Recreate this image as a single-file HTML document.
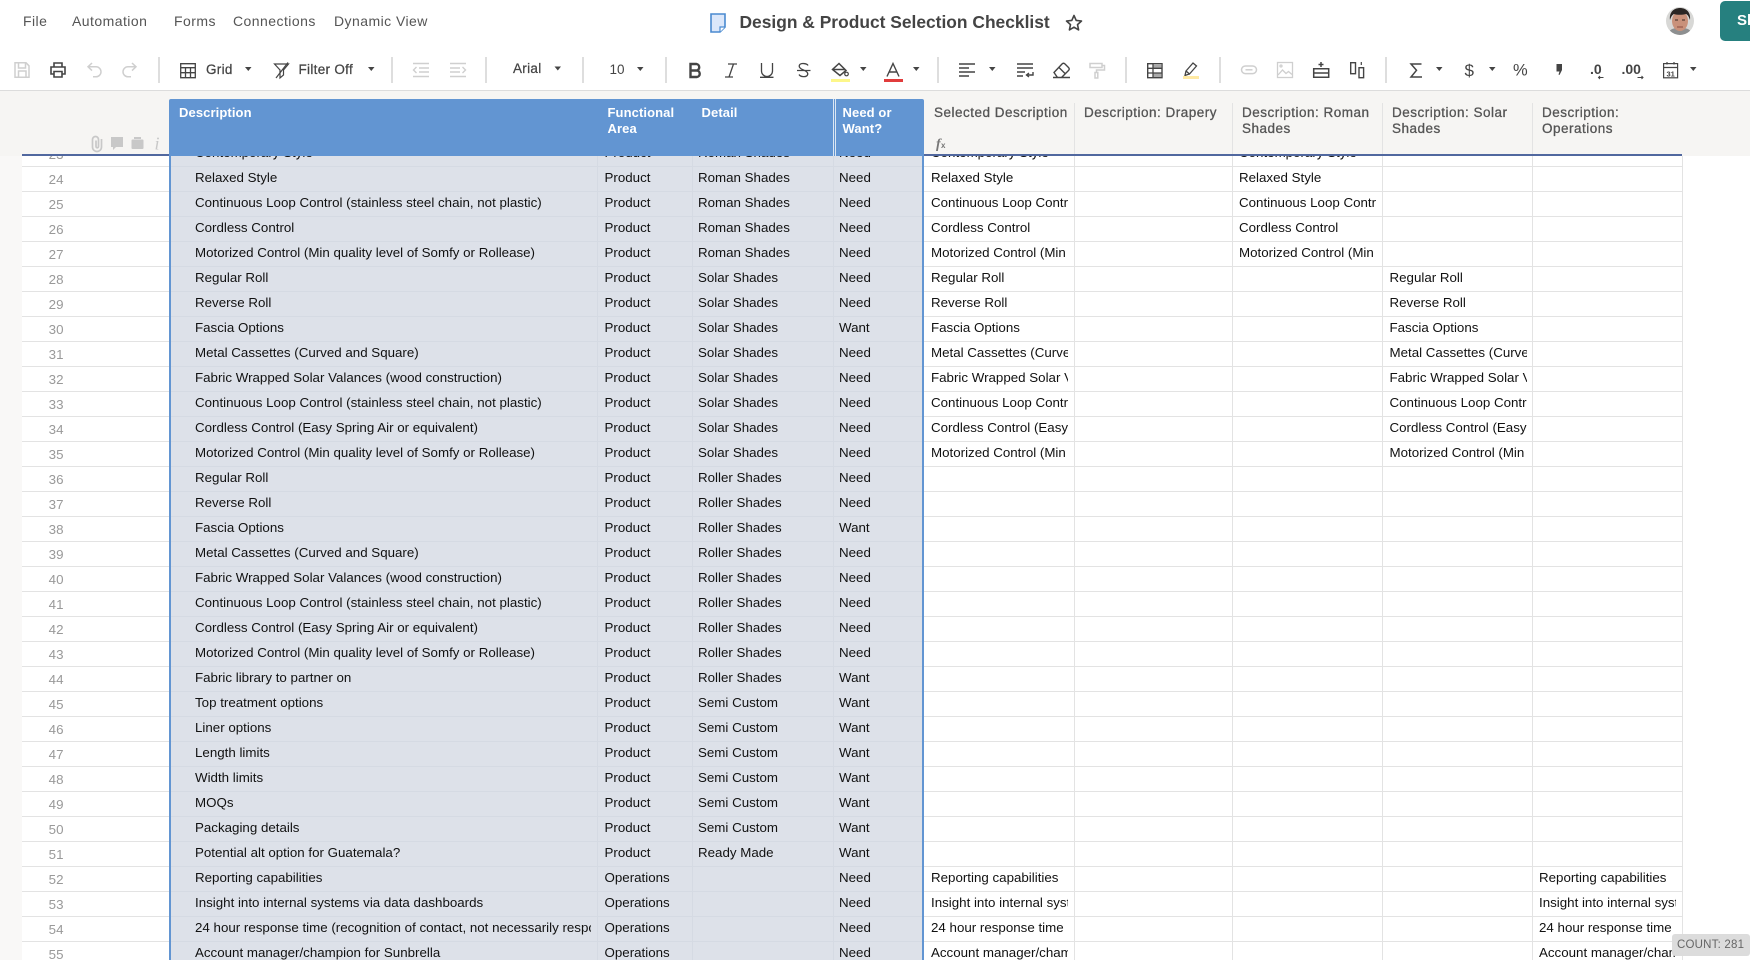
<!DOCTYPE html>
<html lang="en"><head><meta charset="utf-8"><title>Design &amp; Product Selection Checklist</title>
<style>
*{box-sizing:border-box}
html,body{margin:0;padding:0;width:1750px;height:960px;overflow:hidden;background:#fff;font-family:"Liberation Sans",Arial,sans-serif}
.a{position:absolute;white-space:nowrap}
.m{top:12px;font-size:14px;line-height:18px;color:#555;letter-spacing:.45px}
.tb{font-size:13.5px;line-height:16px;color:#444;-webkit-text-stroke:.25px #444;letter-spacing:.3px}
#left{position:absolute;left:0;top:91px;width:22px;height:869px;background:#f9f8f7}
#grid{position:absolute;left:22px;top:142px;width:1660px;height:818px;background:repeating-linear-gradient(to bottom,#fff 0,#fff 24px,#e3e3e3 24px,#e3e3e3 25px)}
#froz{position:absolute;left:169px;top:142px;width:755px;height:818px;background:repeating-linear-gradient(to bottom,#dde1e9 0,#dde1e9 24px,#d5dae3 24px,#d5dae3 25px);border-left:2px solid #6295d2;border-right:2px solid #6295d2}
.v{position:absolute;top:142px;height:818px;width:1px;background:#e3e3e3}
.vf{background:#d5dae3}
#rows{position:absolute;left:0;top:142px;width:1750px}
.r{position:relative;height:25px;font-size:13.33px;line-height:22px;color:#111}
.r span{position:absolute;top:0;white-space:nowrap;overflow:hidden;height:24px}
.r .x{left:22px;width:41.5px;text-align:right;color:#999;top:2px;height:22px}
.d{left:195px;width:396px}.f{left:604.5px;width:85px}.t{left:698px;width:130px}.n{left:839px;width:80px}
.s{left:931px;width:137px}.o{left:1239px;width:137px}.p{left:1389.5px;width:137.5px}.q{left:1539px;width:137px}
#hd{position:absolute;left:0;top:91px;width:1750px;height:65px;background:#f6f5f3}
#hl{position:absolute;left:22px;top:154px;width:1660px;height:2px;background:#51689f}
#hb{position:absolute;left:169px;top:99px;width:755px;height:57px;background:#6295d2;border-radius:2px 2px 0 0}
.h{position:absolute;font-size:13px;line-height:16px;top:104.5px;white-space:nowrap}
.w{color:#fff;font-weight:bold;letter-spacing:.1px}
.g{color:#555;font-size:13.5px;letter-spacing:.5px;-webkit-text-stroke:.3px #555}
.hv{position:absolute;top:103px;height:51px;width:1px;background:#e3e3e3}
</style></head><body>

<div id="left"></div>
<div id="grid"></div>
<div id="froz"></div>
<div class="v vf" style="left:597px"></div>
<div class="v vf" style="left:692px"></div>
<div class="v vf" style="left:833px"></div>
<div class="v" style="left:1074px"></div>
<div class="v" style="left:1232px"></div>
<div class="v" style="left:1382px"></div>
<div class="v" style="left:1532px"></div>
<div class="v" style="left:1682px"></div>

<div id="rows">
<div class="r"><span class="x">23</span><span class="d">Contemporary Style</span><span class="f">Product</span><span class="t">Roman Shades</span><span class="n">Need</span><span class="s">Contemporary Style</span><span class="o">Contemporary Style</span></div>
<div class="r"><span class="x">24</span><span class="d">Relaxed Style</span><span class="f">Product</span><span class="t">Roman Shades</span><span class="n">Need</span><span class="s">Relaxed Style</span><span class="o">Relaxed Style</span></div>
<div class="r"><span class="x">25</span><span class="d">Continuous Loop Control (stainless steel chain, not plastic)</span><span class="f">Product</span><span class="t">Roman Shades</span><span class="n">Need</span><span class="s">Continuous Loop Control (stainless steel chain, not plastic)</span><span class="o">Continuous Loop Control (stainless steel chain, not plastic)</span></div>
<div class="r"><span class="x">26</span><span class="d">Cordless Control</span><span class="f">Product</span><span class="t">Roman Shades</span><span class="n">Need</span><span class="s">Cordless Control</span><span class="o">Cordless Control</span></div>
<div class="r"><span class="x">27</span><span class="d">Motorized Control (Min quality level of Somfy or Rollease)</span><span class="f">Product</span><span class="t">Roman Shades</span><span class="n">Need</span><span class="s">Motorized Control (Min quality level of Somfy or Rollease)</span><span class="o">Motorized Control (Min quality level of Somfy or Rollease)</span></div>
<div class="r"><span class="x">28</span><span class="d">Regular Roll</span><span class="f">Product</span><span class="t">Solar Shades</span><span class="n">Need</span><span class="s">Regular Roll</span><span class="p">Regular Roll</span></div>
<div class="r"><span class="x">29</span><span class="d">Reverse Roll</span><span class="f">Product</span><span class="t">Solar Shades</span><span class="n">Need</span><span class="s">Reverse Roll</span><span class="p">Reverse Roll</span></div>
<div class="r"><span class="x">30</span><span class="d">Fascia Options</span><span class="f">Product</span><span class="t">Solar Shades</span><span class="n">Want</span><span class="s">Fascia Options</span><span class="p">Fascia Options</span></div>
<div class="r"><span class="x">31</span><span class="d">Metal Cassettes (Curved and Square)</span><span class="f">Product</span><span class="t">Solar Shades</span><span class="n">Need</span><span class="s">Metal Cassettes (Curved and Square)</span><span class="p">Metal Cassettes (Curved and Square)</span></div>
<div class="r"><span class="x">32</span><span class="d">Fabric Wrapped Solar Valances (wood construction)</span><span class="f">Product</span><span class="t">Solar Shades</span><span class="n">Need</span><span class="s">Fabric Wrapped Solar Valances (wood construction)</span><span class="p">Fabric Wrapped Solar Valances (wood construction)</span></div>
<div class="r"><span class="x">33</span><span class="d">Continuous Loop Control (stainless steel chain, not plastic)</span><span class="f">Product</span><span class="t">Solar Shades</span><span class="n">Need</span><span class="s">Continuous Loop Control (stainless steel chain, not plastic)</span><span class="p">Continuous Loop Control (stainless steel chain, not plastic)</span></div>
<div class="r"><span class="x">34</span><span class="d">Cordless Control (Easy Spring Air or equivalent)</span><span class="f">Product</span><span class="t">Solar Shades</span><span class="n">Need</span><span class="s">Cordless Control (Easy Spring Air or equivalent)</span><span class="p">Cordless Control (Easy Spring Air or equivalent)</span></div>
<div class="r"><span class="x">35</span><span class="d">Motorized Control (Min quality level of Somfy or Rollease)</span><span class="f">Product</span><span class="t">Solar Shades</span><span class="n">Need</span><span class="s">Motorized Control (Min quality level of Somfy or Rollease)</span><span class="p">Motorized Control (Min quality level of Somfy or Rollease)</span></div>
<div class="r"><span class="x">36</span><span class="d">Regular Roll</span><span class="f">Product</span><span class="t">Roller Shades</span><span class="n">Need</span></div>
<div class="r"><span class="x">37</span><span class="d">Reverse Roll</span><span class="f">Product</span><span class="t">Roller Shades</span><span class="n">Need</span></div>
<div class="r"><span class="x">38</span><span class="d">Fascia Options</span><span class="f">Product</span><span class="t">Roller Shades</span><span class="n">Want</span></div>
<div class="r"><span class="x">39</span><span class="d">Metal Cassettes (Curved and Square)</span><span class="f">Product</span><span class="t">Roller Shades</span><span class="n">Need</span></div>
<div class="r"><span class="x">40</span><span class="d">Fabric Wrapped Solar Valances (wood construction)</span><span class="f">Product</span><span class="t">Roller Shades</span><span class="n">Need</span></div>
<div class="r"><span class="x">41</span><span class="d">Continuous Loop Control (stainless steel chain, not plastic)</span><span class="f">Product</span><span class="t">Roller Shades</span><span class="n">Need</span></div>
<div class="r"><span class="x">42</span><span class="d">Cordless Control (Easy Spring Air or equivalent)</span><span class="f">Product</span><span class="t">Roller Shades</span><span class="n">Need</span></div>
<div class="r"><span class="x">43</span><span class="d">Motorized Control (Min quality level of Somfy or Rollease)</span><span class="f">Product</span><span class="t">Roller Shades</span><span class="n">Need</span></div>
<div class="r"><span class="x">44</span><span class="d">Fabric library to partner on</span><span class="f">Product</span><span class="t">Roller Shades</span><span class="n">Want</span></div>
<div class="r"><span class="x">45</span><span class="d">Top treatment options</span><span class="f">Product</span><span class="t">Semi Custom</span><span class="n">Want</span></div>
<div class="r"><span class="x">46</span><span class="d">Liner options</span><span class="f">Product</span><span class="t">Semi Custom</span><span class="n">Want</span></div>
<div class="r"><span class="x">47</span><span class="d">Length limits</span><span class="f">Product</span><span class="t">Semi Custom</span><span class="n">Want</span></div>
<div class="r"><span class="x">48</span><span class="d">Width limits</span><span class="f">Product</span><span class="t">Semi Custom</span><span class="n">Want</span></div>
<div class="r"><span class="x">49</span><span class="d">MOQs</span><span class="f">Product</span><span class="t">Semi Custom</span><span class="n">Want</span></div>
<div class="r"><span class="x">50</span><span class="d">Packaging details</span><span class="f">Product</span><span class="t">Semi Custom</span><span class="n">Want</span></div>
<div class="r"><span class="x">51</span><span class="d">Potential alt option for Guatemala?</span><span class="f">Product</span><span class="t">Ready Made</span><span class="n">Want</span></div>
<div class="r"><span class="x">52</span><span class="d">Reporting capabilities</span><span class="f">Operations</span><span class="n">Need</span><span class="s">Reporting capabilities</span><span class="q">Reporting capabilities</span></div>
<div class="r"><span class="x">53</span><span class="d">Insight into internal systems via data dashboards</span><span class="f">Operations</span><span class="n">Need</span><span class="s">Insight into internal systems via data dashboards</span><span class="q">Insight into internal systems via data dashboards</span></div>
<div class="r"><span class="x">54</span><span class="d">24 hour response time (recognition of contact, not necessarily response)</span><span class="f">Operations</span><span class="n">Need</span><span class="s">24 hour response time (recognition of contact, not necessarily response)</span><span class="q">24 hour response time (recognition of contact, not necessarily response)</span></div>
<div class="r"><span class="x">55</span><span class="d">Account manager/champion for Sunbrella</span><span class="f">Operations</span><span class="n">Need</span><span class="s">Account manager/champion for Sunbrella</span><span class="q">Account manager/champion for Sunbrella</span></div>
</div>

<div id="hd"></div>
<div id="hl"></div>
<div id="hb"></div>
<div class="a" style="left:833px;top:99px;width:1px;height:57px;background:#dbe6f3"></div>
<div class="a" style="left:835px;top:99px;width:1px;height:57px;background:#dbe6f3"></div>
<div class="hv" style="left:1074px"></div>
<div class="hv" style="left:1232px"></div>
<div class="hv" style="left:1382px"></div>
<div class="hv" style="left:1532px"></div>
<div class="h w" style="left:179px">Description</div>
<div class="h w" style="left:607.5px">Functional<br>Area</div>
<div class="h w" style="left:701.5px">Detail</div>
<div class="h w" style="left:842.5px">Need or<br>Want?</div>
<div class="h g" style="left:934px">Selected Description</div>
<div class="h g" style="left:1084px">Description: Drapery</div>
<div class="h g" style="left:1242px">Description: Roman<br>Shades</div>
<div class="h g" style="left:1392px">Description: Solar<br>Shades</div>
<div class="h g" style="left:1542px">Description:<br>Operations</div>

<div class="a" style="left:0;top:0;width:1750px;height:90px;background:#fff"></div>
<div class="a" style="left:0;top:90px;width:1750px;height:1px;background:#dcdcdc"></div>

<div class="a m" style="left:23px">File</div>
<div class="a m" style="left:72px">Automation</div>
<div class="a m" style="left:174px">Forms</div>
<div class="a m" style="left:233px">Connections</div>
<div class="a m" style="left:334px">Dynamic View</div>
<div class="a" style="left:739.5px;top:11px;font-size:17.4px;line-height:22px;font-weight:bold;color:#444">Design &amp; Product Selection Checklist</div>

<div class="a tb" style="left:206px;top:62px">Grid</div>
<div class="a tb" style="left:298.5px;top:62px">Filter Off</div>
<div class="a tb" style="left:513px;top:61px">Arial</div>
<div class="a tb" style="left:609.5px;top:62px;-webkit-text-stroke:0;letter-spacing:0">10</div>

<div class="a" style="left:1720px;top:1px;width:30px;height:40px;background:#26807f;border-radius:5px 0 0 5px;overflow:hidden;color:#fff;font-weight:bold;font-size:15px;line-height:40px;padding-left:17px">Share</div>

<div class="a" style="left:1672px;top:934px;width:78px;height:22px;background:#dcdcdc;border-radius:3px;color:#666;font-size:11.5px;line-height:22px;padding-left:5px;letter-spacing:.2px">COUNT: 281</div>

<svg class="a" style="left:0;top:0" width="1750" height="160" viewBox="0 0 1750 160" fill="none" stroke-width="1.4">
<!-- title doc -->
<path d="M711 14h14v13l-5 5h-9z" fill="#dbe7fa" stroke="#4a8ad0" stroke-width="1.6"/><path d="M725 27h-5v5" fill="#fff" stroke="#4a8ad0" stroke-width="1.2"/>
<!-- star -->
<path d="M1074 15.500l2.200 4.900 5.300.6-4 3.600 1.100 5.300-4.600-2.700-4.600 2.700 1.100-5.300-4-3.600 5.300-.6z" stroke="#444" stroke-width="1.6" stroke-linejoin="round"/>
<!-- avatar -->
<clipPath id="av"><circle cx="1680" cy="21" r="14"/></clipPath>
<g clip-path="url(#av)" stroke="none"><rect x="1666" y="7" width="28" height="28" fill="#d8d8d6"/><path d="M1668 35c1-6 5-7 12-7s11 1 12 7z" fill="#8d8f90"/><ellipse cx="1680" cy="21" rx="8" ry="10" fill="#c9917a"/><path d="M1670 20c-1-8 4-12 10-12s11 4 10 12c-1-3-2-5-4-6-4 1-9 1-12 0-2 1-3 3-4 6z" fill="#2b2624"/><path d="M1675 20h3M1682 20h3" stroke="#3a2a24" stroke-width="1"/><path d="M1677 27h6" stroke="#8c4b40" stroke-width="1"/></g>
<!-- separators -->
<g fill="#dedede" stroke="none"><rect x="158" y="57" width="2" height="26"/><rect x="391" y="57" width="2" height="26"/><rect x="485" y="57" width="2" height="26"/><rect x="582" y="57" width="2" height="26"/><rect x="665" y="57" width="2" height="26"/><rect x="937" y="57" width="2" height="26"/><rect x="1125" y="57" width="2" height="26"/><rect x="1219" y="57" width="2" height="26"/><rect x="1385" y="57" width="2" height="26"/></g>
<!-- carets -->
<g fill="#444" stroke="none"><path d="M245 67h6.500l-3.200 4zM368 67h6.500l-3.200 4zM554.500 66.500h6.500l-3.200 4zM637 67h6.500l-3.200 4zM860 67h6.500l-3.200 4zM913 67h6.500l-3.200 4zM989 67h6.500l-3.200 4zM1436 67h6.500l-3.200 4zM1489 67h6.500l-3.200 4zM1690 67h6.500l-3.200 4z"/></g>
<!-- save -->
<g stroke="#cfcfcf" stroke-width="1.5"><path d="M15 62.800h11l3 3V77.300H15z"/><path d="M18.500 63v5h7v-5M18.500 77v-6h7.500v6"/></g>
<!-- print -->
<g stroke="#444" stroke-width="1.6"><path d="M54 67v-4h8v4"/><path d="M54 74h-3v-7h14v7h-3"/><path d="M54 71.500h8V77h-8z"/></g>
<!-- undo redo -->
<g stroke="#cfcfcf" stroke-width="1.5"><path d="M92 63l-4 3.800 4 3.800M88 66.800h8a5 5 0 0 1 0 10h-3"/><path d="M132 63l4 3.800-4 3.800M136 66.800h-8a5 5 0 0 0 0 10h3"/></g>
<!-- grid -->
<g stroke="#444" stroke-width="1.3"><path d="M180.700 63.700h14.600v14H180.700zM180.700 67.700h14.600M180.700 72.700h14.600M185.500 67.700v10M190.500 67.700v10"/></g>
<!-- filter -->
<g stroke="#444" stroke-width="1.2"><path d="M274.500 64h14l-5 6v5l-3.500 3v-8z"/><path d="M276 78l12-15.500"/></g>
<!-- outdent indent -->
<g stroke="#cfcfcf" stroke-width="1.4"><path d="M413 63.500h16M419 68h10M419 72h10M413 76.500h16M416.500 67l-3 3 3 3"/><path d="M450 63.500h16M450 68h10M450 72h10M450 76.500h16M462.500 67l3 3-3 3"/></g>
<!-- B I U S -->
<path d="M690.500 64h6a3.300 3.300 0 0 1 0 6.500h-6zM690.500 70.500h6.500a3.300 3.300 0 0 1 0 6.500h-6.500z" stroke="#444" stroke-width="2.400"/>
<g stroke="#444" stroke-width="1.3"><path d="M728 64h9M725 77h8M733.500 64l-4.500 13"/><path d="M761.500 63v8a5.500 5.500 0 0 0 11 0v-8M760 77.300h13.500"/><path d="M797 70.500h13.500M808 65.500c-1-2-7-3-8.500-.5-1 2 1 4 4 5 3 1 5 3 4 5-1.500 2.500-7 2-8.500-.5"/></g>
<!-- fill -->
<path d="M839 63.500l7 7-6 5-7.500-6z" stroke="#444" stroke-width="1.5"/><path d="M833 69.500h12" stroke="#444" stroke-width="1.500"/><circle cx="846.500" cy="74" r="1.800" stroke="#444" stroke-width="1.200"/>
<rect x="831" y="79" width="19" height="3" fill="#fdf78a" stroke="none"/>
<path d="M887 76.500l6-13 6 13M889 72h8" stroke="#444" stroke-width="1.400"/>
<rect x="884" y="79" width="19" height="3" fill="#e13c3c" stroke="none"/>
<!-- align, wrap -->
<g stroke="#444" stroke-width="1.400"><path d="M959 64h16M959 68h10M959 72h16M959 76h10"/><path d="M1017 64h16M1017 68h16M1017 72h8M1017 76h6M1033 72v3h-6M1029 73l-2.500 2 2.500 2"/></g>
<!-- eraser -->
<path d="M1054 72.500l8-8.500c1-1 2-1 3 0l3.500 3.500c1 1 1 2 0 3l-7 7h-4zM1059 67.500l6 6M1053 77.500h17" stroke="#444" stroke-width="1.400"/>
<!-- roller -->
<g stroke="#cfcfcf" stroke-width="1.500"><path d="M1090 63.500h12v4h-12zM1102 65.500h2.500v4.500h-8v2.500"/><path d="M1095 72.500h2.800v5.500H1095z"/></g>
<!-- table -->
<path d="M1147.700 63.700h14.300v14h-14.300z" stroke="#444" stroke-width="1.400"/><path d="M1153 64h8.500v4H1153zM1153 73h8.500v4H1153z" fill="#aaa" stroke="none"/><path d="M1147.700 68.300h14.300M1147.700 73h14.300M1153 64v14" stroke="#444" stroke-width="1.300"/>
<!-- highlighter -->
<path d="M1186 71l7-8 3.500 3-7 8zM1186 71l-1 4.500 4.200-1.500" stroke="#444" stroke-width="1.300"/><rect x="1183" y="76" width="16" height="3" fill="#ffe9a3" stroke="none"/>
<!-- link image -->
<g stroke="#cfcfcf" stroke-width="1.500"><rect x="1241.500" y="66" width="15" height="7.600" rx="3.800"/><path d="M1245.500 69.800h7"/></g>
<g stroke="#cfcfcf" stroke-width="1.300"><rect x="1277.500" y="62.500" width="15" height="15"/><path d="M1278 75l4.500-5 3.500 3.500 2.500-2 3.500 3"/><circle cx="1281" cy="66" r="1"/></g>
<!-- insert row / col -->
<g stroke="#444" stroke-width="1.500"><path d="M1321 62v5M1318.500 64.500h5"/><path d="M1313.700 68.700h15v8.500h-15zM1313.700 73h15"/></g>
<g stroke="#444" stroke-width="1.400"><rect x="1350.700" y="62.700" width="4.800" height="11"/><rect x="1359" y="67.700" width="4.600" height="10"/><path d="M1361.300 62v3" stroke-width="1.200"/></g>
<!-- sigma -->
<path d="M1421.500 64h-10.500l5.500 6.300-5.500 6.700h11" stroke="#444" stroke-width="1.500"/>
<!-- comma -->
<path d="M1556.500 64h5.500v6l-2.500 5-1-.5 1-3h-3z" fill="#444" stroke="none"/>
<!-- arrows -->
<g stroke="#444" stroke-width="1"><path d="M1598.500 77.500h5M1600 76l-1.500 1.500 1.500 1.500"/><path d="M1637.500 77.500h5.500M1641.500 76l1.500 1.500-1.500 1.500"/></g>
<!-- calendar -->
<g stroke="#444" stroke-width="1.200"><rect x="1663.600" y="63.600" width="14" height="14.200"/><path d="M1663.600 67.500h14M1667 62v2.500M1674 62v2.500"/></g>
<!-- left header icons -->
<path d="M101.500 139v8a4.500 4.500 0 0 1-9 0v-7.500a3 3 0 0 1 6 0v7a1.200 1.200 0 0 1-2.500 0v-6" stroke="#c8c8c8" stroke-width="1.700"/>
<path d="M111 137h12v10h-7l-3 3v-3h-2z" fill="#c8c8c8" stroke="none"/>
<path d="M134 138h7" stroke="#c8c8c8" stroke-width="2"/><rect x="131.500" y="139.500" width="12" height="9.500" rx="1" fill="#c8c8c8" stroke="none"/>
<text x="154.500" y="149.500" font-family="Liberation Serif" font-style="italic" font-size="18" fill="#c8c8c8">i</text>
<text x="936" y="148" font-family="Liberation Serif" font-style="italic" font-weight="bold" font-size="14" fill="#777" stroke="none">f</text>
<text x="941" y="148" font-family="Liberation Sans" font-size="8" font-weight="bold" fill="#777" stroke="none">x</text>
<!-- text icons -->
<g font-family="Liberation Sans" fill="#444" stroke="none">
<text x="1464.500" y="76" font-size="17">$</text>
<text x="1513" y="75.500" font-size="16.500">%</text>
<text x="1590" y="74" font-size="14" font-weight="bold">.0</text>
<text x="1621.500" y="74" font-size="14" font-weight="bold">.00</text>
<text x="1666.500" y="76.500" font-size="7.500" font-weight="bold">31</text>
</g>
</svg>
</body></html>
